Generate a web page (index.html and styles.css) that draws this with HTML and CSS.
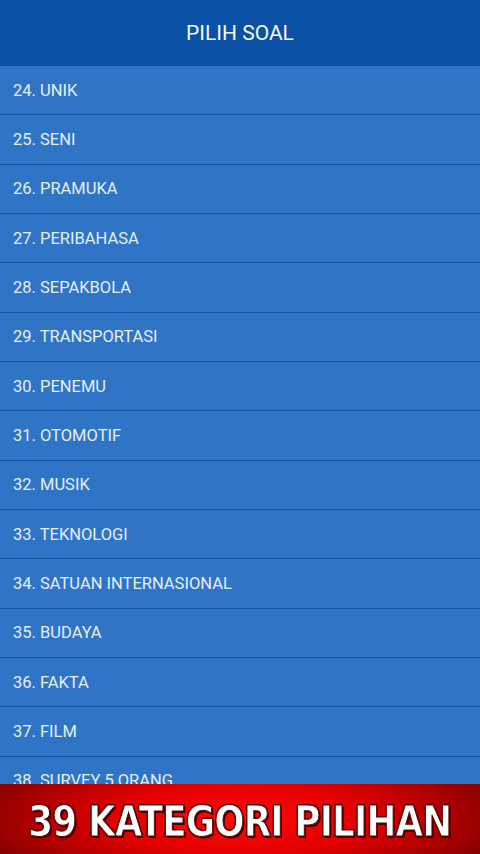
FILE: index.html
```html
<!DOCTYPE html>
<html lang="id">
<head>
    <meta charset="UTF-8">
    <meta name="viewport" content="width=device-width, initial-scale=1.0">
    <title>Pilih Soal</title>
    <link rel="stylesheet" href="styles.css">
</head>
<body>
    <header class="app-bar">PILIH SOAL</header>

    <ul class="soal-list">
        <li>24. UNIK</li>
        <li>25. SENI</li>
        <li>26. PRAMUKA</li>
        <li>27. PERIBAHASA</li>
        <li>28. SEPAKBOLA</li>
        <li>29. TRANSPORTASI</li>
        <li>30. PENEMU</li>
        <li>31. OTOMOTIF</li>
        <li>32. MUSIK</li>
        <li>33. TEKNOLOGI</li>
        <li>34. SATUAN INTERNASIONAL</li>
        <li>35. BUDAYA</li>
        <li>36. FAKTA</li>
        <li>37. FILM</li>
        <li>38. SURVEY 5 ORANG</li>
    </ul>

    <!-- Promo banner over the list -->
    <div class="promo-banner">
        <span class="promo-text">39 KATEGORI PILIHAN</span>
    </div>
</body>
</html>
```

FILE: styles.css
```css
body {
    margin: 0;
    font-family: Roboto, "Noto Sans", sans-serif;
    background: #3074c5;
    height: 854px;
    overflow: hidden;
}
.app-bar {
    height: 66px;
    display: flex;
    justify-content: center;
    align-items: center;
    background: #0a50a4;
    color: #f4f8ff;
    font-size: 21px;
}
.soal-list {
    list-style: none;
    margin: 0;
    padding: 0;
}
.soal-list li {
    height: 48.33px;
    border-bottom: 1px solid #1a56a0;
    display: flex;
    align-items: center;
    padding-left: 13px;
    background: #3074c5;
    color: #e4efff;
    font-size: 16.5px;
}

/* Banner */
.promo-banner {
    position: fixed;
    left: 0;
    right: 0;
    bottom: 0;
    height: 70px;
    display: flex;
    justify-content: center;
    align-items: center;
    background: radial-gradient(ellipse 60% 120% at 50% 50%, #ff0a0a 0%, #e00000 45%, #a00000 80%, #7a0000 100%);
}
.promo-text {
    display: inline-block;
    font-family: "DejaVu Sans", sans-serif;
    font-weight: bold;
    font-size: 42px;
    color: #ffffff;
    letter-spacing: -1px;
    transform: scaleX(0.85);
    -webkit-text-stroke: 1px #5a0000;
    text-shadow: 2px 2px 0 #4a0000, -1px -1px 0 #6a0000, 1px -1px 0 #6a0000, -1px 1px 0 #6a0000;
    white-space: nowrap;
    margin-top: 4px;
}
```
